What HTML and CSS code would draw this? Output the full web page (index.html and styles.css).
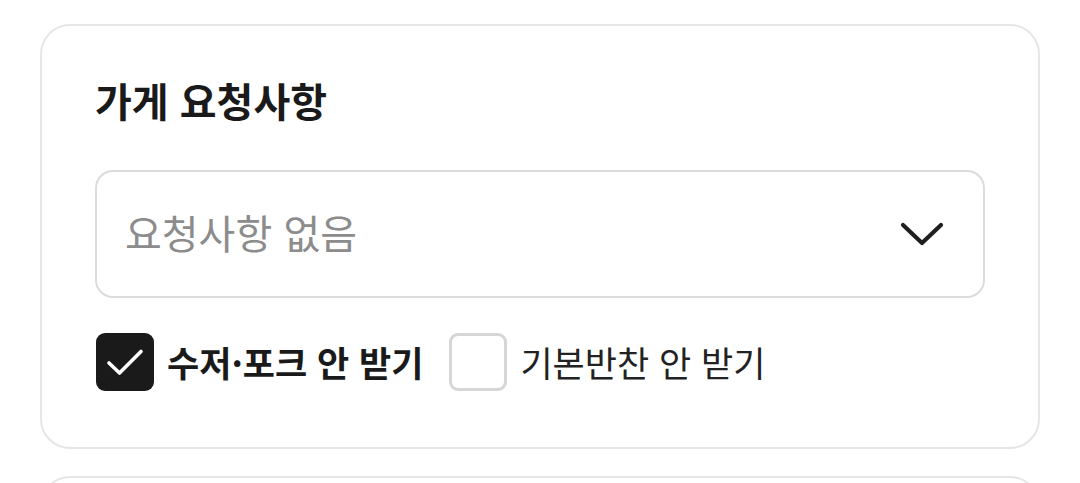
FILE: index.html
```html
<!DOCTYPE html>
<html lang="ko">
<head>
  <meta charset="UTF-8">
  <title>가게 요청사항</title>
  <meta name="viewport" content="width=device-width, initial-scale=1.0">
  <link rel="stylesheet" href="styles.css">
</head>
<body>

<div class="card">
  <h2 class="title">가게 요청사항</h2>

  <div class="select">
    <span class="placeholder">요청사항 없음</span>
    <svg class="chevron" width="44" height="28" viewBox="0 0 44 28">
      <path d="M3 5 L22 23 L41 5" fill="none" stroke="#1f1f1f" stroke-width="4.2" stroke-linecap="round" stroke-linejoin="round"/>
    </svg>
  </div>

  <div class="options">
    <label class="option">
      <span class="box checked">
        <svg width="58" height="58" viewBox="0 0 58 58">
          <path d="M13 30 L23.5 40 L45 18.5" fill="none" stroke="#fff" stroke-width="3.6" stroke-linecap="round" stroke-linejoin="round"/>
        </svg>
      </span>
      <span class="text bold">수저·포크 안 받기</span>
    </label>
    <label class="option">
      <span class="box"></span>
      <span class="text">기본반찬 안 받기</span>
    </label>
  </div>
</div>

<div class="card next"></div>

</body>
</html>
```

FILE: styles.css
```css
body {
  font-family: "Noto Sans CJK KR", "Noto Sans", sans-serif;
  margin: 0;
  padding: 24px 40px 0;
  background-color: #fff;
  color: #1a1a1a;
}
.card {
  border: 2px solid #e6e6e6;
  border-radius: 30px;
  padding: 52px 53px 56px;
}
.card.next {
  margin-top: 27px;
  height: 80px;
  padding: 0;
}
.title {
  margin: 0;
  font-size: 40px;
  line-height: 44px;
  font-weight: 700;
}
.select {
  margin-top: 48px;
  height: 124px;
  border: 2px solid #dcdcdc;
  border-radius: 18px;
  padding: 0 39px 0 28px;
  display: flex;
  align-items: center;
  justify-content: space-between;
}
.placeholder {
  font-size: 40px;
  color: #8c8c8c;
  margin-top: -4px;
}
.options {
  margin-top: 35px;
  display: flex;
  align-items: center;
  gap: 25px;
}
.option {
  display: flex;
  align-items: center;
  gap: 13px;
}
.box {
  width: 58px;
  height: 58px;
  margin-left: 1px;
  box-sizing: border-box;
  border: 3px solid #d6d6d6;
  border-radius: 9px;
  display: block;
}
.box.checked {
  background-color: #1a1a1a;
  border: none;
}
.box svg {
  display: block;
}
.text {
  font-size: 35px;
  line-height: 44px;
  color: #222;
}
.text.bold {
  font-weight: 700;
  color: #1a1a1a;
}
```
